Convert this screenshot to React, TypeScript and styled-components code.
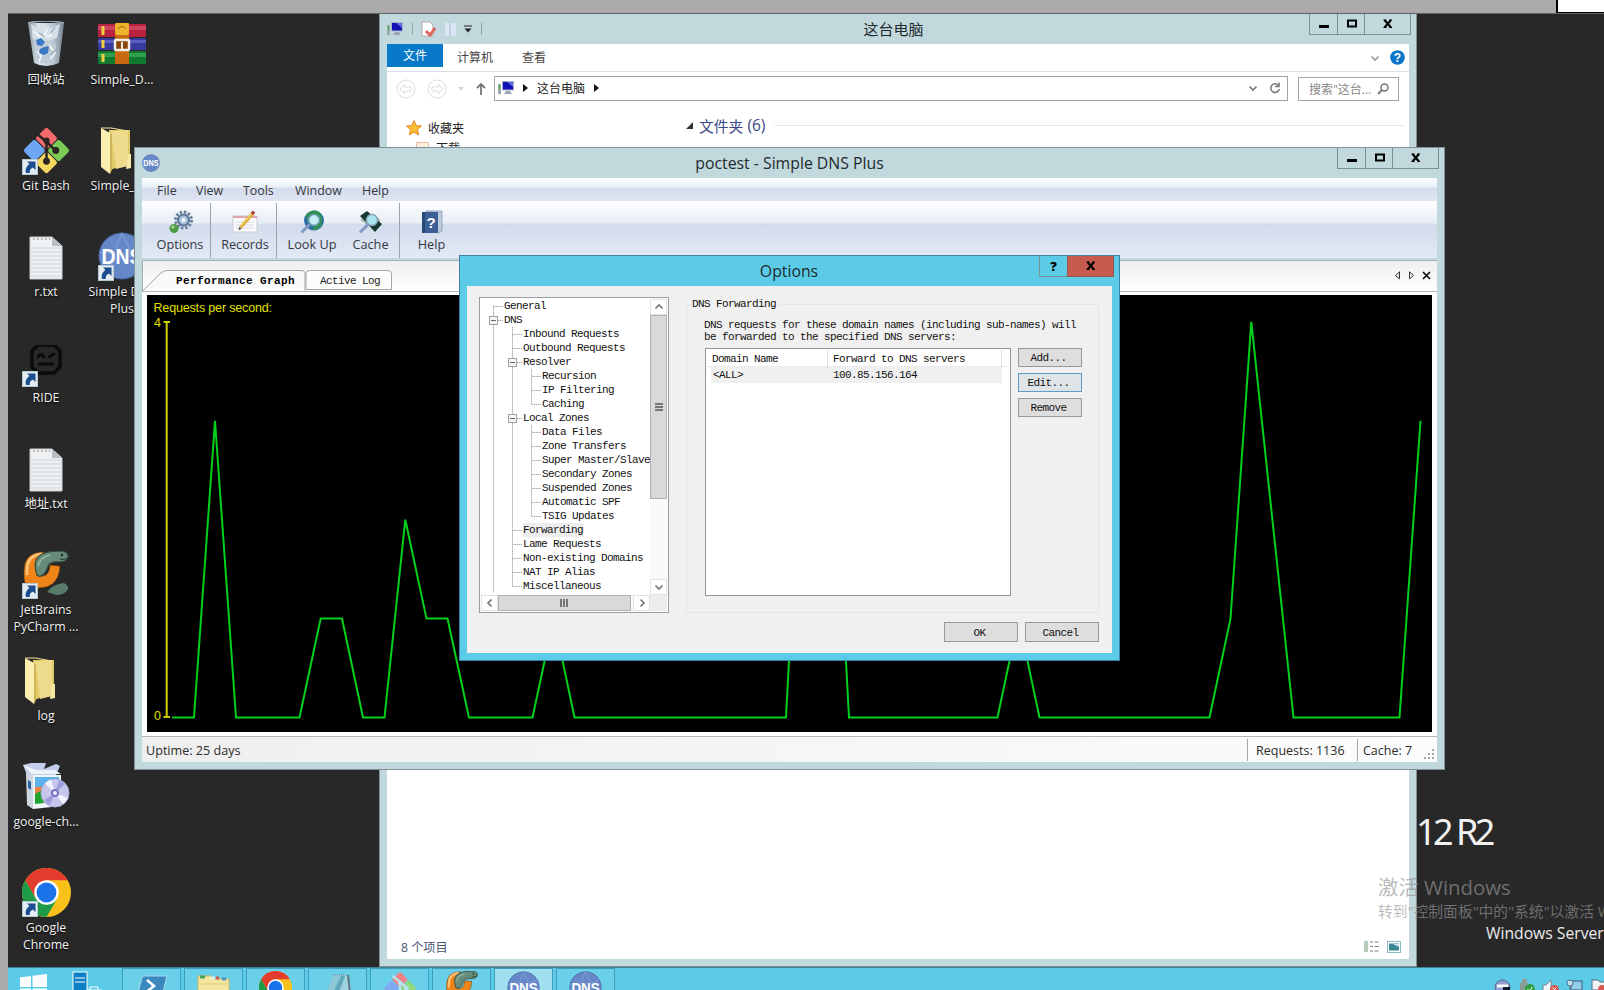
import React from "react";
import styled, { createGlobalStyle, css } from "styled-components";

const UI = `"Open Sans", "Noto Sans CJK SC", sans-serif`;
const MONO = `"Liberation Mono", "Noto Sans CJK SC", monospace`;

const GlobalStyle = createGlobalStyle`
  html, body { margin: 0; padding: 0; overflow: hidden; background: #ababab; }
  * { box-sizing: border-box; }
  svg { display: block; flex: none; }
`;

/* ---------- screen ---------- */

const Screen = styled.div`
  width: 1604px;
  height: 990px;
  display: flex;
  flex-direction: column;
  background: #ababab;
  overflow: hidden;
  font-family: ${UI};
`;

const TopStrip = styled.div`
  height: 13px;
  flex: none;
  display: flex;
  justify-content: flex-end;
`;

const CornerBox = styled.div`
  width: 48px;
  height: 14px;
  background: #fff;
  border: solid #000;
  border-width: 0 0 2px 2px;
`;

const Desktop = styled.div`
  position: relative;
  flex: 1;
  min-height: 0;
  margin-left: 8px;
  background: #282828;
  border-top: 1px solid #5e6464;
  overflow: hidden;
  display: flex;
  flex-direction: column;
`;

const IconArea = styled.div`
  flex: 1;
  min-height: 0;
  display: flex;
  padding-top: 5px;
`;

const IconColumn = styled.div`
  width: 76px;
  display: flex;
  flex-direction: column;
`;

const Shortcut = styled.div`
  height: 106px;
  flex: none;
  display: flex;
  flex-direction: column;
  align-items: center;
  gap: 2px;
`;

const Picture = styled.div<{ $left?: boolean }>`
  position: relative;
  width: 50px;
  height: 50px;
  display: flex;
  align-items: center;
  justify-content: center;
  padding-right: ${(p) => (p.$left ? 11 : 0)}px;
`;

const Arrow = styled.div`
  position: absolute;
  left: 1px;
  bottom: 0;
`;

const Caption = styled.div`
  font-size: 12.3px;
  line-height: 17px;
  color: #f2f2f2;
  text-align: center;
  white-space: pre;
  text-shadow: 0 1px 2px #000;
`;

const Brand = styled.div`
  position: absolute;
  left: 1408px;
  top: 790px;
  display: flex;
  gap: 6px;
  font-size: 36px;
  line-height: 56px;
  letter-spacing: -3.6px;
  color: #f2f2f2;
  font-family: "Noto Sans", sans-serif;
  white-space: nowrap;
`;

const Edition = styled.div`
  position: absolute;
  left: 1478px;
  top: 907px;
  font-size: 15.7px;
  line-height: 24px;
  color: #ececec;
  white-space: nowrap;
`;

const Watermark = styled.div`
  position: absolute;
  left: 1370px;
  top: 858px;
  color: rgba(150, 150, 150, 0.66);
  white-space: nowrap;
  z-index: 1;
`;

const WatermarkTitle = styled.div`
  font-size: 20.4px;
  line-height: 31px;
`;

const WatermarkText = styled.div`
  font-size: 14.8px;
  line-height: 17px;
`;

/* ---------- window frame ---------- */

const Window = styled.section<{ $x: number; $y: number; $w: number; $h: number; $active?: boolean }>`
  position: absolute;
  left: ${(p) => p.$x}px;
  top: ${(p) => p.$y}px;
  width: ${(p) => p.$w}px;
  height: ${(p) => p.$h}px;
  background: ${(p) => (p.$active ? "#5bcbe8" : "#c1d8dd")};
  border: 1px solid ${(p) => (p.$active ? "#3f82a5" : "#7f9196")};
  padding: 0 7px 7px 7px;
  display: flex;
  flex-direction: column;
`;

const TitleBar = styled.header<{ $h: number }>`
  height: ${(p) => p.$h}px;
  flex: none;
  display: grid;
  grid-template-columns: 1fr auto 1fr;
`;

const TitleIcons = styled.div`
  display: flex;
  align-items: center;
  gap: 8.5px;
`;

const Title = styled.div<{ $size: number; $inset?: number }>`
  align-self: center;
  margin-right: ${(p) => p.$inset ?? 0}px;
  padding-bottom: 1px;
  font-size: ${(p) => p.$size}px;
  line-height: 20px;
  color: #1f2b2e;
  white-space: nowrap;
`;

const Controls = styled.div`
  display: flex;
  justify-content: flex-end;
  margin-right: -2px;
`;

const Control = styled.button<{ $w: number; $danger?: boolean }>`
  width: ${(p) => p.$w}px;
  height: 21px;
  padding: 0;
  margin-left: -1px;
  border: 1px solid #7d8f94;
  border-top: 0;
  display: flex;
  align-items: center;
  justify-content: center;
  background: transparent;
  ${(p) =>
    p.$danger &&
    css`
      background: #c75b50;
      border-color: #8c5a48;
    `}
`;

const Separator = styled.i`
  width: 1px;
  height: 12px;
  background: #93a5aa;
`;

/* ---------- explorer ---------- */

const ExplorerBody = styled.div`
  flex: 1;
  min-height: 0;
  background: #fff;
  display: flex;
  flex-direction: column;
`;

const Ribbon = styled.div`
  height: 28px;
  display: flex;
  align-items: flex-start;
  border-bottom: 1px solid #d9e0e4;
  font-size: 12px;
  line-height: 24px;
  color: #444;
`;

const FileTab = styled.div`
  width: 56px;
  height: 23px;
  background: #0779c8;
  color: #fff;
  text-align: center;
  line-height: 23px;
`;

const RibbonTab = styled.div<{ $gap: number }>`
  margin-left: ${(p) => p.$gap}px;
  padding-top: 2px;
`;

const RibbonEnd = styled.div`
  margin: 6px 4px 0 auto;
  display: flex;
  align-items: center;
  gap: 10px;
`;

const NavBar = styled.div`
  height: 30px;
  margin-top: 4px;
  padding-left: 9px;
  display: flex;
  align-items: flex-start;
`;

const NavButtons = styled.div`
  width: 98px;
  height: 26px;
  display: flex;
  align-items: center;
  gap: 11px;
`;

const AddressBox = styled.div`
  width: 794px;
  height: 25px;
  border: 1px solid #a3a3a3;
  padding: 0 6px 1px 3px;
  display: flex;
  align-items: center;
  gap: 9px;
  font-size: 12px;
  color: #222;
`;

const Spacer = styled.div`
  flex: 1;
`;

const RefreshSlot = styled.span`
  margin-left: 2px;
`;

const SearchBox = styled.div`
  width: 101px;
  height: 24px;
  margin: 1px 0 0 10px;
  border: 1px solid #a3a3a3;
  padding: 0 9px 0 10px;
  display: flex;
  align-items: center;
  justify-content: space-between;
  font-size: 12px;
  color: #888;
  white-space: nowrap;
`;

const ExplorerMain = styled.div`
  flex: 1;
  min-height: 0;
  display: flex;
`;

const Sidebar = styled.div`
  width: 296px;
  padding: 12px 0 0 19px;
  font-size: 12px;
  color: #222;
`;

const SideItem = styled.div<{ $indent?: number }>`
  height: 20px;
  margin-left: ${(p) => p.$indent ?? 0}px;
  display: flex;
  align-items: center;
  gap: 6px;
`;

const GroupTitle = styled.div`
  flex: 1;
  height: 18px;
  margin: 10px 5px 0 3px;
  display: flex;
  align-items: center;
  gap: 6px;
  font-size: 14.8px;
  color: #3b4788;

  &::after {
    content: "";
    flex: 1;
    height: 1px;
    margin-left: 3px;
    background: #e6eaea;
  }
`;

const GroupCount = styled.span`
  margin-left: -2px;
  font-size: 15.5px;
`;

const ExplorerStatus = styled.footer`
  height: 25px;
  padding: 0 8px 0 14px;
  display: flex;
  align-items: center;
  gap: 8px;
  font-size: 12.2px;
  color: #4a5578;
`;

/* ---------- DNS server window ---------- */

const MenuBar = styled.nav`
  height: 23px;
  flex: none;
  padding: 2px 0 0 15px;
  display: flex;
  align-items: center;
  font-size: 12.4px;
  color: #333840;
  background: linear-gradient(#fdfdff 0, #eaf0f8 9px, #d5dcec 10px, #dfe5f2 100%);
`;

const MenuItem = styled.span<{ $w: number }>`
  width: ${(p) => p.$w}px;
`;

const Toolbar = styled.div`
  height: 57px;
  flex: none;
  display: flex;
  padding-top: 2px;
  background: linear-gradient(#fefeff 0, #e8eef6 22px, #d3dcec 23px, #e2e8f5 100%);
`;

const Tool = styled.div<{ $w: number; $rule?: boolean; $shift?: number }>`
  width: ${(p) => p.$w}px;
  border-right: ${(p) => (p.$rule ? "1px solid #9aa2ae" : "0")};
  padding: 7px ${(p) => Math.max(0, -(p.$shift ?? 0))}px 0 ${(p) => Math.max(0, p.$shift ?? 0)}px;
  display: flex;
  flex-direction: column;
  align-items: center;
  font-size: 12.7px;
  line-height: 20px;
  color: #333840;
`;

const TabStrip = styled.div`
  height: 31px;
  flex: none;
  margin-top: 2px;
  border-top: 1px solid #a9acb0;
  border-left: 1px solid #a9acb0;
  background: linear-gradient(#efefef, #fff);
  display: flex;
  align-items: flex-end;
`;

const Tabs = styled.div`
  display: grid;
  grid-template-columns: 164px 86px;
  height: 21px;
  position: relative;
  font-family: ${MONO};
  font-size: 11px;
  line-height: 22px;
  color: #222;
  text-align: center;
`;

const TabShape = styled.svg`
  position: absolute;
  left: 0;
  top: 0;
`;

const ActiveTab = styled.div`
  position: relative;
  padding-left: 21px;
  font-weight: 700;
  color: #000;
  letter-spacing: 0.4px;
  white-space: nowrap;
`;

const InactiveTab = styled.div`
  position: relative;
  letter-spacing: -0.6px;
`;

const TabTools = styled.div`
  margin: 0 6px 11px auto;
  display: flex;
  gap: 7px;
  align-items: center;
`;

const GraphFrame = styled.div`
  flex: 1;
  min-height: 0;
  background: #fff;
  border: solid #b4b8ba;
  border-width: 1px 0 1px 0;
  padding: 3px 5px 4px 5px;
`;

const Graph = styled.div`
  height: 100%;
  background: #000;
  overflow: hidden;
`;

const DnsStatus = styled.footer`
  height: 25px;
  flex: none;
  display: flex;
  align-items: center;
  padding: 1px 2px 0 4px;
  font-size: 12.6px;
  color: #2c2c2c;
  background: linear-gradient(90deg, #efefef, #fcfcfc);
`;

const StatusCell = styled.div<{ $w: number }>`
  width: ${(p) => p.$w}px;
  height: 22px;
  line-height: 23px;
  border-left: 1px solid #a6a6a6;
  padding-left: ${(p) => (p.$w > 100 ? 8 : 5)}px;
  font-size: 12.5px;
  white-space: nowrap;
`;

const Grip = styled.svg`
  align-self: flex-end;
  margin-bottom: 2px;
`;

/* ---------- options dialog ---------- */

const DialogBody = styled.div`
  flex: 1;
  min-height: 0;
  background: #f0f0f0;
  padding: 11px 13px 11px 12px;
  display: grid;
  grid-template-columns: 190px 413px;
  grid-template-rows: 316px 20px;
  column-gap: 17px;
  row-gap: 9px;
  font-family: ${MONO};
  font-size: 11px;
  letter-spacing: -0.6px;
  line-height: 14px;
  color: #111;
`;

const TreePane = styled.div`
  width: 190px;
  height: 316px;
  border: 1px solid #9a9da0;
  padding: 1px;
  background: #fff;
  display: grid;
  grid-template-columns: 169px 17px;
  grid-template-rows: 296px 16px;
`;

const TreeList = styled.div`
  overflow: hidden;
  padding-left: 4px;
`;

const TreeRow = styled.div`
  height: 14px;
  display: flex;
  white-space: pre;
`;

const dotsV = "repeating-linear-gradient(#aaa 0 1px, #ddd 1px 2px)";
const dotsH = "repeating-linear-gradient(90deg, #aaa 0 1px, #ddd 1px 2px)";

const Guide = styled.span<{ $kind: string }>`
  width: 19px;
  height: 14px;
  flex: none;
  display: flex;
  align-items: center;
  padding: 1px 0 0 4px;
  background-repeat: no-repeat;
  ${(p) =>
    p.$kind === "|" &&
    css`
      background-image: ${dotsV};
      background-size: 1px 14px;
      background-position: 8px 0;
    `}
  ${(p) =>
    (p.$kind === "+" || p.$kind === "-") &&
    css`
      background-image: ${dotsV}, ${dotsH};
      background-size: 1px 14px, 9px 1px;
      background-position: 8px 0, 9px 7px;
    `}
  ${(p) =>
    p.$kind === "L" &&
    css`
      background-image: ${dotsV}, ${dotsH};
      background-size: 1px 8px, 9px 1px;
      background-position: 8px 0, 9px 7px;
    `}
  ${(p) =>
    p.$kind === "r" &&
    css`
      background-image: ${dotsV}, ${dotsH};
      background-size: 1px 7px, 9px 1px;
      background-position: 8px 7px, 9px 7px;
    `}
`;

const Toggle = styled.span`
  width: 9px;
  height: 9px;
  border: 1px solid #a2a2a2;
  background: linear-gradient(#666, #666) center / 5px 1px no-repeat #f6f6f6;
`;

const TreeLabel = styled.span<{ $selected?: boolean }>`
  padding-right: 1px;
  line-height: 15px;
  background: ${(p) => (p.$selected ? "#ededed" : "transparent")};
`;

const Scrollbar = styled.div<{ $horizontal?: boolean }>`
  display: flex;
  flex-direction: ${(p) => (p.$horizontal ? "row" : "column")};
  background: #fafafa;
`;

const ScrollEnd = styled.div`
  width: 17px;
  height: 16px;
  flex: none;
  border: 1px solid #e2e2e2;
  background: #fff;
  display: flex;
  align-items: center;
  justify-content: center;
`;

const ScrollThumb = styled.div<{ $length: number; $horizontal?: boolean }>`
  ${(p) => (p.$horizontal ? "width" : "height")}: ${(p) => p.$length}px;
  border: 1px solid #b0b0b0;
  background: #d9d9d9;
  display: flex;
  align-items: center;
  justify-content: center;
`;

const ScrollCorner = styled.div`
  background: #ededf0;
`;

const Group = styled.fieldset`
  margin: 0;
  padding: 8px 16px 0 16px;
  min-width: 0;
  border: 1px solid #e2e6ea;
  height: 316px;
`;

const Legend = styled.legend`
  margin-left: -12px;
  padding: 0 3px 0 1px;
  line-height: 14px;
`;

const Description = styled.p`
  margin: 0 0 5px 1px;
  line-height: 12px;
  white-space: pre;
`;

const ListRow = styled.div`
  display: flex;
  gap: 7px;
  align-items: flex-start;
  margin-left: 2px;
`;

const ListBox = styled.div`
  width: 306px;
  height: 248px;
  flex: none;
  border: 1px solid #929699;
  background: #fff;
  padding: 1px;
`;

const ListHeader = styled.div`
  display: grid;
  grid-template-columns: 121px 174px 1fr;
  height: 17px;
  line-height: 18px;
  border-bottom: 1px solid #ececec;
`;

const HeaderCell = styled.div`
  padding-left: 5px;
  border-right: 1px solid #e0e0e0;
  &:last-child { border: 0; }
`;

const ListItem = styled.div`
  display: grid;
  grid-template-columns: 120px 171px;
  width: 291px;
  height: 16px;
  line-height: 16px;
  margin-left: 4px;
  background: #f0f0f0;
`;

const ItemCell = styled.div`
  padding-left: 2px;
`;

const ButtonStack = styled.div`
  display: flex;
  flex-direction: column;
  gap: 6px;
`;

const PushButton = styled.button<{ $w: number; $h: number; $focused?: boolean }>`
  width: ${(p) => p.$w}px;
  height: ${(p) => p.$h}px;
  padding: 1px 3px 0 0;
  border: 1px solid ${(p) => (p.$focused ? "#5f9cc4" : "#989898")};
  background: ${(p) => (p.$focused ? "#dfe4e8" : "#dedede")};
  font: inherit;
  line-height: 16px;
  letter-spacing: inherit;
  color: inherit;
`;

const DialogButtons = styled.div`
  grid-column: 1 / -1;
  display: flex;
  justify-content: flex-end;
  gap: 7px;
`;

const HelpMark = styled.span`
  font-size: 13px;
  font-weight: 800;
  line-height: 18px;
  font-family: ${UI};
  color: #000;
`;

/* ---------- taskbar ---------- */

const Taskbar = styled.footer`
  position: relative;
  height: 23px;
  flex: none;
  background: #5bcbe8;
  border-top: 1px solid #3d7f96;
  display: flex;
  overflow: hidden;
`;

const TaskPinned = styled.div<{ $w: number; $pad: number }>`
  width: ${(p) => p.$w}px;
  padding: ${(p) => p.$pad}px 0 0 12px;
`;

const Tasks = styled.div`
  display: flex;
  gap: 3px;
`;

const TaskButton = styled.div<{ $on?: boolean }>`
  width: 59px;
  height: 40px;
  border: 1px solid #3f9dbb;
  background: ${(p) => (p.$on ? "#a1e0f1" : "#6ad0ea")};
  padding: 2px 0 0 0;
  display: flex;
  justify-content: center;
  align-items: flex-start;
`;

const Tray = styled.div`
  margin-left: auto;
  width: 110px;
  padding-top: 11px;
  display: flex;
  gap: 7px;
`;

/* ---------- drawings ---------- */

const MinGlyph = () => (
  <svg width="12" height="12"><rect x="1" y="7" width="10" height="3" fill="#000" /></svg>
);
const MaxGlyph = () => (
  <svg width="12" height="12"><rect x="3" y="2.5" width="8" height="6" fill="none" stroke="#000" strokeWidth="2" /></svg>
);
const CloseGlyph = () => (
  <svg width="12" height="12"><path d="M2.5 2l6.5 7.5M9 2L2.500 9.500" stroke="#000" strokeWidth="2.1" /><path d="M1.500 2h3M7.500 2h2.500M1.500 9.500h3M7.500 9.500h2.500" stroke="#000" strokeWidth="1" /></svg>
);

const ShortcutArrow = () => (
  <svg width="16" height="16" viewBox="0 0 16 16">
    <rect x=".5" y=".5" width="15" height="15" fill="#e3edf2" stroke="#b6c8d0" />
    <path d="M5 2.500h8.500V11l-2.600-2.600C8.500 9.500 7.500 11 7.800 14H4c-1-4 .5-7 3.500-9z" fill="#1b4d8f" />
  </svg>
);

const RecycleBin = () => (
  <svg width="38" height="46" viewBox="0 0 38 46">
    <defs>
      <linearGradient id="bin" x1="0" x2="1"><stop offset="0" stopColor="#8797a3" /><stop offset=".3" stopColor="#dde7ee" /><stop offset=".7" stopColor="#b9c7d2" /><stop offset="1" stopColor="#74838f" /></linearGradient>
    </defs>
    <path d="M1 2h36l-5 40q-13 6-25 0z" fill="url(#bin)" />
    <path d="M4 3l7 5 6-5 7 4 9-4-3 14-9 3-7-5-8 4z" fill="#d6e0e8" />
    <path d="M7 21l7 4 5-5 10 4-2 16-8 3-9-2z" fill="#bfccd7" />
    <path d="M10 30l4 5-2 6M22 24l6 8-5 6M6 10l8 6M20 8l-3 8 8-2" stroke="#f6fafc" strokeWidth="1.500" fill="none" />
    <path d="M28 6l-4 6M12 12l6 4M24 34l4-5" stroke="#9aabb8" strokeWidth="1.300" />
    <path d="M9 19l5-2 4 4-3 4-5-1zM17 26l5-1-1 7-4 2-5-2 1-4z" fill="#3b78c4" />
    <path d="M1 2q18-4 36 0" stroke="#9aa9b4" fill="none" strokeWidth="1.500" />
  </svg>
);

const WinRar = () => (
  <svg width="50" height="42" viewBox="0 0 50 42">
    <rect x="1" y="1" width="48" height="13" rx="1" fill="#b8223f" /><rect x="1" y="3" width="48" height="4" fill="#d0435f" />
    <rect x="1" y="15" width="48" height="12" rx="1" fill="#3a3a9c" /><rect x="1" y="17" width="48" height="3" fill="#5a5ec0" />
    <rect x="1" y="28" width="48" height="13" rx="1" fill="#127a30" /><rect x="1" y="30" width="48" height="4" fill="#31a04c" />
    <path d="M6 3v9M6 17v8M6 31v8" stroke="#f1cf3f" strokeWidth="3" />
    <rect x="18" y="0" width="14" height="41" fill="#c96a13" /><rect x="18" y="0" width="14" height="12" rx="2" fill="#edb52b" />
    <path d="M21 6q4-5 8 0" stroke="#a36b0d" fill="none" />
    <rect x="18" y="17" width="14" height="10" rx="1" fill="#8a4309" stroke="#f3efe6" strokeWidth="2.500" />
    <path d="M25 19v7" stroke="#eee" strokeWidth="2" />
  </svg>
);

const GitLogo = ({ size = 49 }: { size?: number }) => (
  <svg width={size} height={size} viewBox="0 0 50 50">
    <g transform="rotate(45 25 25)">
      <rect x="8" y="8" width="16.500" height="16.500" rx="2.500" fill="#f4696b" />
      <rect x="25.500" y="8" width="16.500" height="16.500" rx="2.500" fill="#7ccb56" />
      <rect x="8" y="25.500" width="16.500" height="16.500" rx="2.500" fill="#6fa6f3" />
      <rect x="25.500" y="25.500" width="16.500" height="16.500" rx="2.500" fill="#f6d860" />
    </g>
    <path d="M15 8l10 8v20M25 16l9 9" stroke="#2b2523" strokeWidth="2.600" fill="none" />
    <circle cx="25" cy="15" r="3.200" fill="#2b2523" /><circle cx="34.500" cy="25" r="3.500" fill="#2b2523" /><circle cx="25" cy="36" r="3.500" fill="#2b2523" />
  </svg>
);

/* Outlined variant of the Git mark used by the running program */
const GitTask = () => (
  <svg width="34" height="34" viewBox="0 0 50 50">
    <g transform="rotate(45 25 25)">
      <rect x="8" y="8" width="16.500" height="16.500" rx="2" fill="#f08089" />
      <rect x="25.500" y="8" width="16.500" height="16.500" rx="2" fill="#8fd97c" />
      <rect x="8" y="25.500" width="16.500" height="16.500" rx="2" fill="#7fa9f0" />
      <rect x="25.500" y="25.500" width="16.500" height="16.500" rx="2" fill="#efdf86" />
    </g>
    <path d="M14 7l11 9v22M25 16l10 9" stroke="#b5e4ee" strokeWidth="3.500" fill="none" />
    <circle cx="25" cy="17" r="3" fill="#b5e4ee" /><circle cx="34.500" cy="25" r="3.500" fill="#b5e4ee" />
  </svg>
);

const Folder = () => (
  <svg width="34" height="47" viewBox="0 0 34 47">
    <path d="M9 3h21v33l-20 7z" fill="#e0c967" />
    <path d="M11 4h17v35l-12 3z" fill="#eddb8b" />
    <path d="M1 1l9 5v41l-9-7z" fill="#faeeb0" />
    <path d="M10 6v41l2-4V8z" fill="#cfb557" />
    <path d="M28 27h3v14l-5 1z" fill="#f6e9a6" />
    <path d="M1 1h10l17 3" stroke="#f4e59a" fill="none" />
  </svg>
);

const TextFile = () => (
  <svg width="34" height="48" viewBox="0 -4 34 48">
    <path d="M1 1h22l10 9v33H1z" fill="#f0f1f2" stroke="#c9cdd0" />
    <path d="M23 1l10 9H23z" fill="#b9bec2" />
    <path d="M4 3h17" stroke="#999" strokeWidth="1.500" strokeDasharray="1.500 2.500" />
    <path d="M2 12h30M2 16h30M2 20h30M2 24h30M2 28h30M2 32h30M2 36h30M2 40h30" stroke="#c9d5de" />
  </svg>
);

const DnsLogo = ({ size }: { size: number }) => (
  <svg width={size} height={size} viewBox="0 0 48 48">
    <circle cx="24" cy="24" r="23" fill="#6688c8" stroke="#4a69a5" />
    <path d="M24 1L8 40M24 1l18 38M2 20l44 6M6 36l38-24" stroke="#7a99d2" strokeWidth="1.500" />
    <text x="24" y="32" textAnchor="middle" fontFamily="Liberation Sans, sans-serif" fontWeight="700" fontSize="22" textLength="41" lengthAdjust="spacingAndGlyphs" fill="#fff">DNS</text>
  </svg>
);

const RideLogo = () => (
  <svg width="32" height="34" viewBox="0 2 32 34">
    <path d="M8 2h16l6 6v16l-6 6H8l-6-6V8z" fill="none" stroke="#0b0b0b" strokeWidth="3.500" strokeLinejoin="round" />
    <path d="M8 14q3-5 6 0M19 14l5-3M9 21h14" stroke="#0b0b0b" strokeWidth="2.800" fill="none" strokeLinecap="round" />
  </svg>
);

const PyCharm = ({ size = 46 }: { size?: number }) => (
  <svg width={size} height={size} viewBox="0 0 46 46">
    <path d="M24 41q6-8 17-9 5 3 4 6-3 6-12 6z" fill="#587a68" />
    <path d="M21 1Q1 1 1 20v7q0 10 14 10Q36 37 37 15L27 14q-1 12-9 11-5-1-3-9z" fill="#f08419" stroke="#5c3510" strokeWidth=".7" />
    <path d="M19 3Q4 4 4 19v5" fill="none" stroke="#ffc073" strokeWidth="3" />
    <path d="M14 24Q8 6 22 2q6-2 16-2 8 1 7 6-1 5-9 5-9-1-11 4-1 4-4 8-4 4-7 1z" fill="#668b78" stroke="#354a40" strokeWidth="1.200" />
    <path d="M15 15q2-9 12-11" stroke="#8fae9c" fill="none" strokeWidth="2" />
    <path d="M37 8q4 1 8-1" stroke="#2f4438" fill="none" strokeWidth="1.200" /><circle cx="39" cy="4" r="1.200" fill="#1e2e26" />
  </svg>
);

const Installer = () => (
  <svg width="48" height="48" viewBox="0 0 48 48">
    <path d="M1 3l8-2h15l-2 6 12-5 4 2-4 9H5z" fill="#c3cfea" />
    <path d="M1 3l9 9h29l-6-4H14z" fill="#eef2fa" />
    <path d="M4 10l7 3v34l-6-4z" fill="#ccd6e0" /><path d="M11 13h28v31l-28 3z" fill="#f1f6fb" />
    <path d="M6 18l3 2v8l-3-2z" fill="#2563a5" />
    <path d="M13 15h24v16H13z" fill="#5bb2ea" /><path d="M13 25h20v8H13z" fill="#ed7d42" /><path d="M13 32l9-5v14l-9 1z" fill="#20a62e" />
    <circle cx="33" cy="31" r="14" fill="#c7c7ee" stroke="#a9acd2" />
    <path d="M33 31L23 21.500a14 14 0 0 1 6-4zM33 31l13 5a14 14 0 0 1-5 6z" fill="#f2f3ff" />
    <path d="M33 31l10-9a14 14 0 0 0-6-4zM33 31l-11 7a14 14 0 0 0 6 5z" fill="#9f9fdb" />
    <circle cx="33" cy="31" r="4" fill="#7773bd" /><circle cx="33" cy="31" r="2" fill="#ececff" />
  </svg>
);

const Chrome = ({ size = 49 }: { size?: number }) => (
  <svg width={size} height={size} viewBox="0 0 48 48">
    <circle cx="24" cy="24" r="24" fill="#fbc11b" />
    <path d="M24 12h20.800A24 24 0 0 0 3.200 12l10.400 18z" fill="#e33b2e" />
    <path d="M3.200 12A24 24 0 0 0 24 48l10.400-18-10.400 6-10.400-6z" fill="#1e9b48" />
    <circle cx="24" cy="24" r="12" fill="#fff" /><circle cx="24" cy="24" r="9.700" fill="#1a73e8" />
  </svg>
);

const Monitor = () => (
  <svg width="16" height="14" viewBox="0 0 16 14">
    <rect x="0" y="3" width="3" height="10" fill="#9aa9a9" /><rect x="1" y="4" width="1" height="4" fill="#39b54a" />
    <rect x="4.500" y=".5" width="11" height="8.500" fill="#1010b4" stroke="#a7b4cc" />
    <path d="M9 1h6v5z" fill="#5a6ee0" /><path d="M8 10h4l2 3H6z" fill="#9aa6b4" />
  </svg>
);

const NavCircle = ({ back }: { back?: boolean }) => (
  <svg width="20" height="20" viewBox="0 0 20 20">
    <circle cx="10" cy="10" r="9" fill="none" stroke="#dcdcdc" />
    <path transform={back ? undefined : "rotate(180 10 10)"} d="M4 10l4.500-4.500V8H15v4H8.500v2.500z" fill="none" stroke="#dcdcdc" />
  </svg>
);

const Chevron = ({ color = "#777", turn = 0 }: { color?: string; turn?: number }) => (
  <svg width="10" height="10" viewBox="0 0 10 10">
    <path transform={`rotate(${turn} 5 5)`} d="M1.500 3.500L5 7l3.500-3.500" fill="none" stroke={color} strokeWidth="1.700" />
  </svg>
);

const Crumb = () => <svg width="5" height="8"><path d="M0 0l5 4-5 4z" fill="#111" /></svg>;

const Star = () => (
  <svg width="16" height="16" viewBox="0 0 16 16">
    <path d="M8 .5l2.200 5 5.300.5-4 3.600 1.200 5.400L8 12.200 3.300 15l1.200-5.400L.5 6l5.300-.5z" fill="#fdbd35" stroke="#e2872b" />
  </svg>
);

const GearTool = () => (
  <svg width="26" height="24" viewBox="0 0 26 24">
    <circle cx="16.500" cy="10" r="8" fill="none" stroke="#6a819d" strokeWidth="3" strokeDasharray="2.500 1.700" />
    <circle cx="16.500" cy="10" r="5.500" fill="#a9c0dc" stroke="#5d7695" strokeWidth="2" /><circle cx="16.500" cy="10" r="2.200" fill="#edf3fa" />
    <circle cx="7" cy="18.500" r="4.500" fill="#4a9a45" /><circle cx="6" cy="17" r="1.800" fill="#9cd48c" />
  </svg>
);
const RecordsTool = () => (
  <svg width="26" height="24" viewBox="0 0 26 24">
    <rect x="1" y="6" width="24" height="16" fill="#fbfbfb" stroke="#c9ccd4" /><path d="M1 7h24" stroke="#e0a5ab" strokeWidth="2" />
    <path d="M4 12h18M4 15h18M4 18h18" stroke="#d0d8e4" />
    <path d="M8.500 17.500L21 3" stroke="#d9a62f" strokeWidth="3.400" /><path d="M8.500 16.500L20 3.500" stroke="#f5d66b" strokeWidth="1.300" /><path d="M20 4l2-2.500" stroke="#a8413c" strokeWidth="3.400" /><path d="M6.500 20l3-1-2-2z" fill="#333" />
  </svg>
);
const LookupTool = () => (
  <svg width="26" height="24" viewBox="0 0 26 24">
    <circle cx="15" cy="10.500" r="10" fill="#2f6fa8" /><path d="M7 5q7-7 13-3 5 5 2 14-6 6-9 3 5-4-4-6z" fill="#2f9152" />
    <circle cx="15" cy="10" r="5.500" fill="#c4eef2" stroke="#6c9cb0" strokeWidth="1.500" /><path d="M10.500 14.500l-8 8" stroke="#7f9bc4" strokeWidth="3" />
  </svg>
);
const CacheTool = () => (
  <svg width="26" height="24" viewBox="0 0 26 24">
    <path d="M2 6l7-5 15 13-7 8z" fill="#17382e" /><path d="M3 9l3 3M7 12l3 3M14 4l3 3M19 8l3 3" stroke="#8fae93" strokeWidth="1.500" />
    <circle cx="14" cy="10" r="5.500" fill="#a9e6ee" stroke="#89a6b7" strokeWidth="1.500" /><path d="M10 14.500l-8 8" stroke="#7f9bc4" strokeWidth="3" />
  </svg>
);
const HelpTool = () => (
  <svg width="22" height="24" viewBox="0 0 22 24">
    <path d="M5 1h16v20l-4 2z" fill="#bccada" stroke="#7e92aa" strokeWidth=".7" /><path d="M1 2h16v21H1z" fill="#3c5f95" /><path d="M1 2h3v21H1z" fill="#284878" />
    <text x="10" y="18" textAnchor="middle" fontFamily="Liberation Sans, sans-serif" fontWeight="700" fontSize="15" fill="#fff">?</text>
  </svg>
);

const series: Array<[number, number]> = [
  [172, 0], [194, 0], [215, 3], [236, 0], [299.5, 0], [320.7, 1], [342, 1], [363, 0], [384.5, 0], [405.3, 2], [426.5, 1], [447.5, 1],
  [469, 0], [532.5, 0], [553.7, 1], [574.5, 0], [786, 0], [807, 4], [828, 4], [849, 0], [997.5, 0], [1018.5, 1], [1039.5, 0],
  [1209.5, 0], [1230.5, 1], [1251.3, 4], [1293.500, 0], [1399.500, 0], [1420.500, 3],
];

const Plot = () => (
  <svg width="1286" height="437" viewBox="147 295 1286 437">
    <g fontFamily="Liberation Sans, sans-serif" fontSize="12.5" fill="#e0e000">
      <text x="153.500" y="312" textLength="118.500">Requests per second:</text>
      <text x="154" y="327">4</text>
      <text x="154" y="720">0</text>
    </g>
    <path d="M166.700 322V717M163.500 322h6.500M163.500 717h6.500" stroke="#cfcf00" strokeWidth="2" fill="none" />
    <polyline points={series.map(([x, v]) => `${x},${717.5 - v * 98.9}`).join(" ")} fill="none" stroke="#00d21c" strokeWidth="2" />
  </svg>
);

/* ---------- content ---------- */

const shortcuts: Array<Array<{ label: string; art: React.ReactNode; link?: boolean; left?: boolean }>> = [
  [
    { label: "回收站", art: <RecycleBin /> },
    { label: "Git Bash", art: <GitLogo />, link: true },
    { label: "r.txt", art: <TextFile /> },
    { label: "RIDE", art: <RideLogo />, link: true },
    { label: "地址.txt", art: <TextFile /> },
    { label: "JetBrains\nPyCharm ...", art: <PyCharm />, link: true },
    { label: "log", art: <Folder />, left: true },
    { label: "google-ch...", art: <Installer /> },
    { label: "Google\nChrome", art: <Chrome />, link: true },
  ],
  [
    { label: "Simple_D...", art: <WinRar /> },
    { label: "Simple_D...", art: <Folder />, left: true },
    { label: "Simple DNS\nPlus", art: <DnsLogo size={48} />, link: true },
  ],
];

const treeRows: Array<[string, string, boolean?]> = [
  ["r", "General"], ["-", "DNS"], ["|+", "Inbound Requests"], ["|+", "Outbound Requests"], ["|-", "Resolver"],
  ["||+", "Recursion"], ["||+", "IP Filtering"], ["||L", "Caching"], ["|-", "Local Zones"], ["||+", "Data Files"],
  ["||+", "Zone Transfers"], ["||+", "Super Master/Slave"], ["||+", "Secondary Zones"], ["||+", "Suspended Zones"],
  ["||+", "Automatic SPF"], ["||L", "TSIG Updates"], ["|+", "Forwarding", true], ["|+", "Lame Requests"],
  ["|+", "Non-existing Domains"], ["|+", "NAT IP Alias"], ["|L", "Miscellaneous"],
];

const WindowButtons = () => (
  <Controls>
    <Control $w={29}><MinGlyph /></Control>
    <Control $w={28}><MaxGlyph /></Control>
    <Control $w={47}><CloseGlyph /></Control>
  </Controls>
);

const Explorer = () => (
  <Window $x={371} $y={-1} $w={1038} $h={954}>
    <TitleBar $h={30}>
      <TitleIcons>
        <Monitor />
        <Separator />
        <svg width="15" height="16"><path d="M1 1h8l3 3v11H1z" fill="#fff" stroke="#b7a9a9" /><path d="M5 10l4 4 5-7" stroke="#e0665c" strokeWidth="3" fill="none" /></svg>
        <svg width="11" height="15"><path d="M0 1h11v13H0z" fill="#dbe5f3" /><path d="M5 1v13" stroke="#c3d0e6" strokeWidth="2" /></svg>
        <svg width="8" height="8"><path d="M0 1h8" stroke="#222" /><path d="M.5 3.500h7l-3.500 4z" fill="#222" /></svg>
        <Separator />
      </TitleIcons>
      <Title $size={15} $inset={9}>这台电脑</Title>
      <WindowButtons />
    </TitleBar>
    <ExplorerBody>
      <Ribbon>
        <FileTab>文件</FileTab>
        <RibbonTab $gap={14}>计算机</RibbonTab>
        <RibbonTab $gap={29}>查看</RibbonTab>
        <RibbonEnd>
          <Chevron color="#999" />
          <svg width="15" height="15"><circle cx="7.500" cy="7.500" r="7.300" fill="#0b76c9" /><text x="7.500" y="12" textAnchor="middle" fontFamily="Liberation Sans, sans-serif" fontWeight="700" fontSize="12" fill="#fff">?</text></svg>
        </RibbonEnd>
      </Ribbon>
      <NavBar>
        <NavButtons>
          <NavCircle back />
          <NavCircle />
          <svg width="6" height="4"><path d="M0 0h6L3 4z" fill="#d4d4d4" /></svg>
          <svg width="12" height="14"><path d="M6 13V2M2 6l4-4 4 4" fill="none" stroke="#777" strokeWidth="1.800" /></svg>
        </NavButtons>
        <AddressBox>
          <Monitor />
          <Crumb />
          <span>这台电脑</span>
          <Crumb />
          <Spacer />
          <Chevron />
          <RefreshSlot><svg width="12" height="12"><path d="M9.500 3.500A4.300 4.300 0 1 0 10.300 7M10 .5v4H6" fill="none" stroke="#777" strokeWidth="1.500" /></svg></RefreshSlot>
        </AddressBox>
        <SearchBox>
          <span>搜索"这台...</span>
          <svg width="12" height="12"><circle cx="7.500" cy="4.500" r="3.500" fill="none" stroke="#777" strokeWidth="1.500" /><path d="M5 7l-4 4" stroke="#777" strokeWidth="1.800" /></svg>
        </SearchBox>
      </NavBar>
      <ExplorerMain>
        <Sidebar>
          <SideItem><Star />收藏夹</SideItem>
          <SideItem $indent={10}><svg width="14" height="12"><path d="M.5.5h12v11H.5z" fill="#fdeedd" stroke="#e9b9a5" /></svg>下载</SideItem>
        </Sidebar>
        <GroupTitle><svg width="7" height="7"><path d="M7 0v7H0z" fill="#333" /></svg>文件夹<GroupCount>(6)</GroupCount></GroupTitle>
      </ExplorerMain>
      <ExplorerStatus>
        8 个项目
        <Spacer />
        <svg width="15" height="13"><path d="M0 1h4v11H0z" fill="#b7c9bd" /><path d="M6 2h3M6 6.500h3M6 11h3M10.500 2h4M10.500 6.500h4M10.500 11h4" stroke="#78838a" /></svg>
        <svg width="14" height="12"><rect x=".5" y=".5" width="13" height="11" fill="#fff" stroke="#8bbcc0" /><rect x="2" y="2.500" width="10" height="7" fill="#3b8796" /><path d="M6 3h6v3z" fill="#cfe8ee" /></svg>
      </ExplorerStatus>
    </ExplorerBody>
  </Window>
);

const DnsServer = () => (
  <Window $x={126} $y={133} $w={1311} $h={623}>
    <TitleBar $h={30}>
      <TitleIcons><DnsLogo size={18} /></TitleIcons>
      <Title $size={15.8}>poctest - Simple DNS Plus</Title>
      <WindowButtons />
    </TitleBar>
    <MenuBar>
      <MenuItem $w={39}>File</MenuItem>
      <MenuItem $w={47}>View</MenuItem>
      <MenuItem $w={52}>Tools</MenuItem>
      <MenuItem $w={67}>Window</MenuItem>
      <MenuItem $w={40}>Help</MenuItem>
    </MenuBar>
    <Toolbar>
      <Tool $w={69} $rule $shift={8}><GearTool />Options</Tool>
      <Tool $w={66} $rule $shift={3}><RecordsTool />Records</Tool>
      <Tool $w={70}><LookupTool />Look Up</Tool>
      <Tool $w={53} $rule $shift={-5}><CacheTool />Cache</Tool>
      <Tool $w={63}><HelpTool />Help</Tool>
    </Toolbar>
    <TabStrip>
      <Tabs>
        <TabShape width="250" height="21">
          <path d="M0 20.500L18 3q3-2.500 6-2.500H159q3 0 3 3v17" fill="#fafafa" stroke="#a2a5a8" />
          <path d="M163 19.500V4q0-3.500 4-3.500H245q3.500 0 3.500 3.500v15.500z" fill="#fcfcfc" stroke="#a2a5a8" />
        </TabShape>
        <ActiveTab>Performance Graph</ActiveTab>
        <InactiveTab>Active Log</InactiveTab>
      </Tabs>
      <TabTools>
        <svg width="7" height="9"><path d="M5.500.8v7L1.500 4.500z" fill="none" stroke="#333" /></svg>
        <svg width="7" height="9"><path d="M1.500.8v7l4-3.300z" fill="none" stroke="#333" /></svg>
        <svg width="9" height="9"><path d="M1 1l7 7M8 1L1 8" stroke="#111" strokeWidth="1.700" /></svg>
      </TabTools>
    </TabStrip>
    <GraphFrame><Graph><Plot /></Graph></GraphFrame>
    <DnsStatus>
      Uptime: 25 days
      <Spacer />
      <StatusCell $w={110}>Requests: 1136</StatusCell>
      <StatusCell $w={67}>Cache: 7</StatusCell>
      <Grip width="11" height="11"><path d="M8 1h2M4 5h2M8 5h2M0 9h2M4 9h2M8 9h2" stroke="#a5a5a5" strokeWidth="2" /></Grip>
    </DnsStatus>
  </Window>
);

const Options = () => (
  <Window $x={451} $y={241} $w={661} $h={406} $active>
    <TitleBar $h={30}>
      <span />
      <Title $size={15.8} $inset={1}>Options</Title>
      <Controls>
        <Control $w={29}><HelpMark>?</HelpMark></Control>
        <Control $w={47} $danger><CloseGlyph /></Control>
      </Controls>
    </TitleBar>
    <DialogBody>
      <TreePane>
        <TreeList>
          {treeRows.map(([guides, label, selected]) => (
            <TreeRow key={label}>
              {guides.split("").map((g, i) => (
                <Guide key={i} $kind={g}>{g === "-" && <Toggle />}</Guide>
              ))}
              <TreeLabel $selected={selected}>{label}</TreeLabel>
            </TreeRow>
          ))}
        </TreeList>
        <Scrollbar>
          <ScrollEnd><Chevron turn={180} /></ScrollEnd>
          <ScrollThumb $length={184}><svg width="8" height="9"><path d="M0 1h8M0 4h8M0 7h8" stroke="#555" strokeWidth="1.500" /></svg></ScrollThumb>
          <Spacer />
          <ScrollEnd><Chevron /></ScrollEnd>
        </Scrollbar>
        <Scrollbar $horizontal>
          <ScrollEnd><Chevron turn={90} /></ScrollEnd>
          <ScrollThumb $horizontal $length={133}><svg width="9" height="8"><path d="M1 0v8M4 0v8M7 0v8" stroke="#555" strokeWidth="1.500" /></svg></ScrollThumb>
          <Spacer />
          <ScrollEnd><Chevron turn={-90} /></ScrollEnd>
        </Scrollbar>
        <ScrollCorner />
      </TreePane>
      <Group>
        <Legend>DNS Forwarding</Legend>
        <Description>{"DNS requests for these domain names (including sub-names) will\nbe forwarded to the specified DNS servers:"}</Description>
        <ListRow>
          <ListBox>
            <ListHeader>
              <HeaderCell>Domain Name</HeaderCell>
              <HeaderCell>Forward to DNS servers</HeaderCell>
              <HeaderCell />
            </ListHeader>
            <ListItem>
              <ItemCell>&lt;ALL&gt;</ItemCell>
              <ItemCell>100.85.156.164</ItemCell>
            </ListItem>
          </ListBox>
          <ButtonStack>
            <PushButton $w={64} $h={19}>Add...</PushButton>
            <PushButton $w={64} $h={19} $focused>Edit...</PushButton>
            <PushButton $w={64} $h={19}>Remove</PushButton>
          </ButtonStack>
        </ListRow>
      </Group>
      <DialogButtons>
        <PushButton $w={74} $h={20}>OK</PushButton>
        <PushButton $w={74} $h={20}>Cancel</PushButton>
      </DialogButtons>
    </DialogBody>
  </Window>
);

const taskIcons: Array<{ art: React.ReactNode; on?: boolean }> = [
  { art: <svg width="32" height="30"><path d="M8 5h21q2 0 1.500 2L25 29H0L6 7q.5-2 2-2z" fill="#3a88be" stroke="#a9d8ec" /><path d="M11 9l7 6-9 7" stroke="#fff" strokeWidth="2.600" fill="none" /></svg> },
  { art: <svg width="34" height="30"><path d="M1 5h13l2 3h16v22H1z" fill="#f5e6a0" stroke="#c9b463" /><path d="M3 6h5" stroke="#4aa35a" strokeWidth="3" /><path d="M13 7h5" stroke="#e4efe4" strokeWidth="3" /><path d="M19 7h3" stroke="#d2534c" strokeWidth="3" /><path d="M25 8h4" stroke="#4b8fc0" strokeWidth="3" /><path d="M3 13h27" stroke="#e2cc77" /></svg> },
  { art: <Chrome size={33} /> },
  { art: <svg width="32" height="30"><path d="M11 4h15l3 26H2z" fill="#9fd2e0" /><path d="M11 5h12l-9 25H2z" fill="#5fa9bb" /><path d="M11 5l8 0-12 25H2z" fill="#8cc8d5" /><path d="M26 4l3 26" stroke="#5f7580" strokeWidth="2" /><path d="M11 4h15" stroke="#678" strokeDasharray="1 1" /></svg> },
  { art: <GitTask /> },
  { art: <PyCharm size={32} /> },
  { art: <DnsLogo size={33} />, on: true },
  { art: <DnsLogo size={33} /> },
];

export default function App() {
  return (
    <Screen>
      <GlobalStyle />
      <TopStrip><CornerBox /></TopStrip>
      <Desktop>
        <IconArea>
          {shortcuts.map((column, c) => (
            <IconColumn key={c}>
              {column.map((s, i) => (
                <Shortcut key={i}>
                  <Picture $left={s.left}>
                    {s.art}
                    {s.link && <Arrow><ShortcutArrow /></Arrow>}
                  </Picture>
                  <Caption>{s.label}</Caption>
                </Shortcut>
              ))}
            </IconColumn>
          ))}
        </IconArea>
        <Brand><span>12</span><span>R2</span></Brand>
        <Edition>Windows Server</Edition>
        <Explorer />
        <DnsServer />
        <Options />
        <Watermark>
          <WatermarkTitle>激活 Windows</WatermarkTitle>
          <WatermarkText>转到"控制面板"中的"系统"以激活 Windows</WatermarkText>
        </Watermark>
        <Taskbar>
          <TaskPinned $w={52} $pad={6}><svg width="27" height="28"><path d="M0 3.500l11-1.600V13H0zM12.500 1.700L27 0v13H12.500zM0 14.500h11V26L0 24.500zM12.500 14.500H27V28l-14.500-2z" fill="#fff" /></svg></TaskPinned>
          <TaskPinned $w={62} $pad={3}><svg width="32" height="30"><rect x="1" y="1" width="14" height="28" fill="#0d7fc4" stroke="#fff" /><path d="M3 7h10M3 11h10" stroke="#fff" /><path d="M15 19h14v11H15z" fill="#9aa8c8" stroke="#fff" /><path d="M18 19v-3h8v3" fill="none" stroke="#fff" /></svg></TaskPinned>
          <Tasks>
            {taskIcons.map((t, i) => <TaskButton key={i} $on={t.on}>{t.art}</TaskButton>)}
          </Tasks>
          <Tray>
            <svg width="17" height="16"><circle cx="8.500" cy="8.500" r="7.500" fill="#8fa0d0" stroke="#59638f" /><path d="M3 7h11" stroke="#fff" strokeWidth="3" /><path d="M9 8h7v5H9z" fill="#141c2c" /></svg>
            <svg width="17" height="16"><path d="M2 4h9v12H2zM4 0h5v4H4z" fill="#8a9a95" /><circle cx="12" cy="10" r="5" fill="#2fa143" /><path d="M9.500 10l2 2 3-4" stroke="#fff" fill="none" /></svg>
            <svg width="17" height="16"><path d="M1 6h3l5-5v15l-5-4H1z" fill="#f3f6f8" stroke="#77868f" /><circle cx="12.500" cy="10.500" r="4.500" fill="#d8574e" /><path d="M10.500 8.500l4 4M14.500 8.500l-4 4" stroke="#fff" /></svg>
            <svg width="17" height="16"><rect x="5" y="2" width="11" height="9" fill="#8fd0e8" stroke="#4f7090" strokeWidth="1.300" /><circle cx="4" cy="4" r="3" fill="#bfe0ef" stroke="#4f7090" /><path d="M4 7v8" stroke="#4f7090" /></svg>
            <svg width="17" height="16"><path d="M2 0v16M2 1h6l2 2h6v8H2" fill="#f1f4f6" stroke="#5c6f80" /><circle cx="12.500" cy="10.500" r="4.500" fill="#d8574e" /></svg>
          </Tray>
        </Taskbar>
      </Desktop>
    </Screen>
  );
}
